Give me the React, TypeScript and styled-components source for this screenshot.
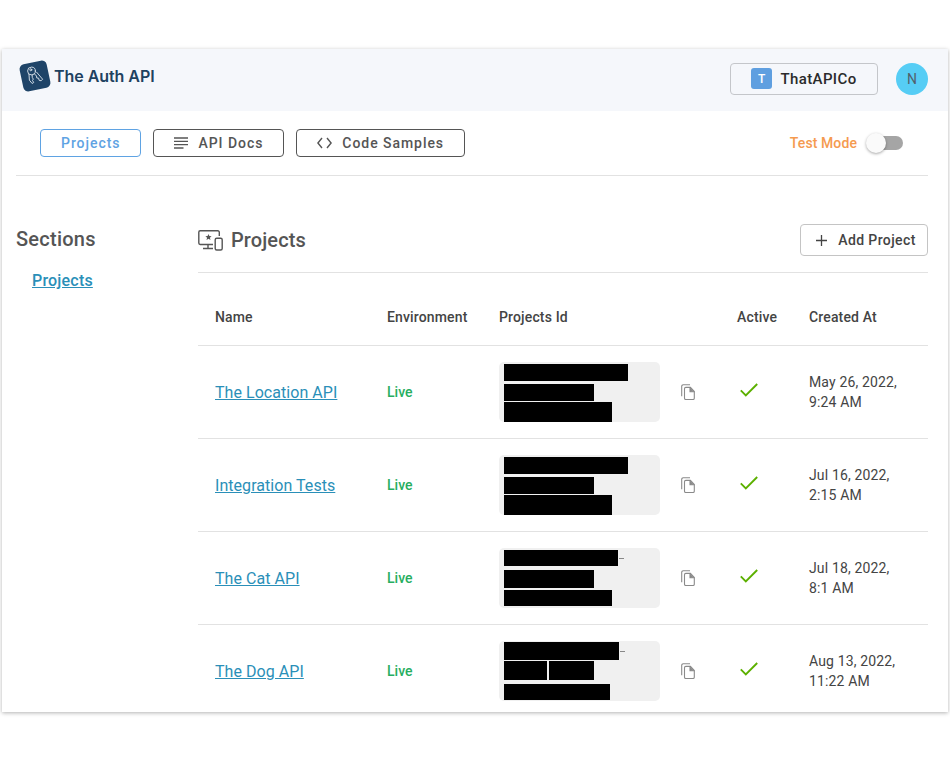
import styled, { createGlobalStyle } from 'styled-components';

type Bar = { width: number; height: number; top: number; dash?: boolean; split?: number };

type Project = {
  name: string;
  createdDate: string;
  createdTime: string;
  bars: Bar[];
};

const projects: Project[] = [
  {
    name: 'The Location API',
    createdDate: 'May 26, 2022,',
    createdTime: '9:24 AM',
    bars: [
      { width: 124, height: 17, top: 2 },
      { width: 90, height: 17, top: 3 },
      { width: 108, height: 20, top: 1 },
    ],
  },
  {
    name: 'Integration Tests',
    createdDate: 'Jul 16, 2022,',
    createdTime: '2:15 AM',
    bars: [
      { width: 124, height: 17, top: 2 },
      { width: 90, height: 17, top: 3 },
      { width: 108, height: 20, top: 1 },
    ],
  },
  {
    name: 'The Cat API',
    createdDate: 'Jul 18, 2022,',
    createdTime: '8:1 AM',
    bars: [
      { width: 114, height: 16, top: 2, dash: true },
      { width: 90, height: 18, top: 4 },
      { width: 108, height: 16, top: 2 },
    ],
  },
  {
    name: 'The Dog API',
    createdDate: 'Aug 13, 2022,',
    createdTime: '11:22 AM',
    bars: [
      { width: 115, height: 18, top: 1, dash: true },
      { width: 90, height: 19, top: 1, split: 43 },
      { width: 106, height: 16, top: 4 },
    ],
  },
];

export default function App() {
  return (
    <>
      <GlobalStyle />
      <Card>
        <Header>
          <Brand>
            <svg width='34' height='34' viewBox='0 0 34 34' fill='none'>
              <rect x='3.2' y='3.2' width='27.600' height='27.600' rx='5' transform='rotate(-12 17 17)' fill='#1f4468' />
              <g stroke='#dfe7ee' strokeWidth='0.9' strokeLinecap='round' strokeLinejoin='round'>
                <circle cx='13.500' cy='12' r='3.900' />
                <circle cx='12.800' cy='10.800' r='1' />
                <path d='M16.200 14.600l2.300 2.400.3 2 1.900.2.300 2 2.100.6 1.500-1.600-6-7' />
                <path d='M11 15.400l.4 5.800 2.700 3.300 1.600-1-1.200-2 .8-1.400-1-1.600-.2-2.700' />
              </g>
            </svg>
            <BrandName>The Auth API</BrandName>
          </Brand>
          <HeaderRight>
            <OrgButton>
              <OrgBadge>T</OrgBadge>
              ThatAPICo
            </OrgButton>
            <Avatar>N</Avatar>
          </HeaderRight>
        </Header>

        <Nav>
          <NavTabs>
            <NavButton $active>Projects</NavButton>
            <NavButton>
              <svg width='14' height='13' viewBox='0 0 14 13' fill='none' stroke='#555' strokeWidth='1.3'>
                <path d='M0 1h14M0 4.300h14M0 7.600h14M0 11h9.500' />
              </svg>
              API Docs
            </NavButton>
            <NavButton>
              <svg width='15' height='12' viewBox='0 0 15 12' fill='none' stroke='#555' strokeWidth='1.4'>
                <path d='M5 1L.9 6 5 11M10 1l4.100 5-4.100 5' />
              </svg>
              Code Samples
            </NavButton>
          </NavTabs>
          <TestMode>
            Test Mode
            <Toggle>
              <Knob />
            </Toggle>
          </TestMode>
        </Nav>

        <Body>
          <Sidebar>
            <SidebarTitle>Sections</SidebarTitle>
            <SidebarLink href='#'>Projects</SidebarLink>
          </Sidebar>

          <Main>
            <TitleRow>
              <Title>
                <svg width='25' height='21' viewBox='0 0 25 21' fill='none' stroke='#555' strokeWidth='1.4'>
                  <path d='M15 14.500H2.200A1.500 1.500 0 0 1 .8 13V2.300A1.500 1.500 0 0 1 2.200.8h17.600a1.500 1.500 0 0 1 1.500 1.500V6' />
                  <path d='M5 18.500h10M10 14.500v4' />
                  <rect x='17.200' y='8.200' width='7' height='11.800' rx='1.500' />
                  <path d='M10.500 4l.9 2.100 2.200.2-1.700 1.400.6 2.200-2-1.200-2 1.200.6-2.200-1.700-1.400 2.200-.2z' fill='#555' stroke='none' />
                </svg>
                Projects
              </Title>
              <AddButton>
                <svg width='11' height='11' viewBox='0 0 11 11' fill='none' stroke='#444' strokeWidth='1.3'>
                  <path d='M5.500 0v11M0 5.500h11' />
                </svg>
                Add Project
              </AddButton>
            </TitleRow>

            <HeadRow>
              <span>Name</span>
              <span>Environment</span>
              <span>Projects Id</span>
              <span>Active</span>
              <span>Created At</span>
            </HeadRow>

            {projects.map((project) => (
              <Row key={project.name}>
                <NameLink href='#'>{project.name}</NameLink>
                <Env>Live</Env>
                <IdCell>
                  <IdBox>
                    {project.bars.map((bar, index) => (
                      <RedactedLine key={index} $top={bar.top}>
                        {bar.split ? (
                          <>
                            <Redacted $width={bar.split} $height={bar.height} />
                            <Redacted $width={bar.width - bar.split - 2} $height={bar.height} />
                          </>
                        ) : (
                          <Redacted $width={bar.width} $height={bar.height} />
                        )}
                        {bar.dash && <Dash />}
                      </RedactedLine>
                    ))}
                  </IdBox>
                  <svg width='14' height='16' viewBox='0 0 14 16' fill='none' stroke='#8a8a8a' strokeWidth='1.1'>
                    <path d='M9 .8H2.200A1.500 1.500 0 0 0 .7 2.300v9.900' />
                    <path d='M4.800 3.400h4.600l3.900 4v6.800a1.300 1.300 0 0 1-1.300 1.300H4.800a1.300 1.300 0 0 1-1.300-1.300V4.700a1.300 1.300 0 0 1 1.300-1.300z' />
                    <path d='M9 3.500v4.300h4.300' fill='#8a8a8a' />
                  </svg>
                </IdCell>
                <CheckIcon width='18' height='14' viewBox='0 0 18 14' fill='none' stroke='#5cb000' strokeWidth='1.9'>
                  <path d='M.8 7.400l5 5L17.200 1' />
                </CheckIcon>
                <Created>
                  {project.createdDate}
                  <br />
                  {project.createdTime}
                </Created>
              </Row>
            ))}
          </Main>
        </Body>
      </Card>
    </>
  );
}

const GlobalStyle = createGlobalStyle`
  html, body {
    margin: 0;
    padding: 0;
    background: #ffffff;
    font-family: Roboto, "Liberation Sans", sans-serif;
  }
  body {
    box-sizing: border-box;
    min-height: 760px;
    padding-top: 49px;
  }
`;

const Card = styled.div`
  margin: 0 2px;
  height: 663px;
  overflow: hidden;
  background: #ffffff;
  box-shadow: 0 1px 4px rgba(0, 0, 0, 0.3);
`;

const Header = styled.header`
  height: 62px;
  display: flex;
  align-items: center;
  justify-content: space-between;
  padding: 0 20px 0 16px;
  background: #f5f7fb;
`;

const Brand = styled.div`
  display: flex;
  align-items: center;
  gap: 3px;
  margin-top: -9px;
`;

const BrandName = styled.span`
  font-family: Inter, sans-serif;
  font-size: 16px;
  font-weight: 600;
  letter-spacing: -0.05px;
  color: #20415f;
  margin: 1px 0 0 -1px;
`;

const HeaderRight = styled.div`
  display: flex;
  align-items: center;
  gap: 18px;
  margin-top: -3px;
`;

const OrgButton = styled.div`
  width: 148px;
  height: 32px;
  box-sizing: border-box;
  display: flex;
  align-items: center;
  justify-content: center;
  gap: 8px;
  border: 1px solid #c4c6ca;
  border-radius: 4px;
  font-size: 15px;
  font-weight: 500;
  letter-spacing: 0.4px;
  color: #2b2b2b;
`;

const OrgBadge = styled.span`
  width: 21px;
  height: 21px;
  display: flex;
  align-items: center;
  justify-content: center;
  border-radius: 3px;
  background: #5f9fe0;
  color: #ffffff;
  font-size: 12px;
  font-weight: 500;
`;

const Avatar = styled.div`
  width: 32px;
  height: 32px;
  display: flex;
  align-items: center;
  justify-content: center;
  border-radius: 50%;
  background: #56cdf5;
  color: #52606b;
  font-size: 14px;
`;

const Nav = styled.nav`
  height: 65px;
  box-sizing: border-box;
  margin: 0 20px 0 14px;
  padding: 0 25px 0 24px;
  display: flex;
  align-items: center;
  justify-content: space-between;
  border-bottom: 1px solid #e2e2e2;
`;

const NavTabs = styled.div`
  display: flex;
  gap: 12px;
`;

const NavButton = styled.button<{ $active?: boolean }>`
  height: 28px;
  padding: 0 20px;
  display: flex;
  align-items: center;
  gap: 10px;
  background: #ffffff;
  border: 1px solid ${(p) => (p.$active ? '#5fa3e3' : '#555555')};
  border-radius: 4px;
  font-family: Roboto, sans-serif;
  font-size: 14px;
  font-weight: 500;
  letter-spacing: 0.95px;
  color: ${(p) => (p.$active ? '#5fa3e3' : '#555555')};
`;

const TestMode = styled.div`
  display: flex;
  align-items: center;
  gap: 11px;
  font-size: 14px;
  font-weight: 500;
  letter-spacing: 0.1px;
  color: #f59a4f;
`;

const Toggle = styled.div`
  position: relative;
  width: 35px;
  height: 14px;
  border-radius: 7px;
  background: #a5a5a5;
`;

const Knob = styled.div`
  position: absolute;
  left: -2px;
  top: -3px;
  width: 20px;
  height: 20px;
  border-radius: 50%;
  background: #fafafa;
  box-shadow: 0 1px 3px rgba(0, 0, 0, 0.35);
`;

const Body = styled.div`
  display: flex;
  padding: 48px 20px 0 14px;
`;

const Sidebar = styled.aside`
  width: 182px;
  flex-shrink: 0;
`;

const SidebarTitle = styled.div`
  margin-top: 3px;
  font-size: 20px;
  line-height: 24px;
  font-weight: 500;
  letter-spacing: 0.25px;
  color: #555555;
`;

const SidebarLink = styled.a`
  display: inline-block;
  margin: 20px 0 0 16px;
  font-size: 16px;
  font-weight: 500;
  letter-spacing: 0.2px;
  color: #2a8fb8;
`;

const Main = styled.main`
  flex: 1;
  min-width: 0;
`;

const TitleRow = styled.div`
  height: 49px;
  box-sizing: border-box;
  display: flex;
  justify-content: space-between;
  align-items: flex-start;
  border-bottom: 1px solid #e2e2e2;
`;

const Title = styled.h2`
  margin: 0;
  height: 32px;
  display: flex;
  align-items: center;
  gap: 8px;
  font-size: 20px;
  font-weight: 500;
  letter-spacing: 0.1px;
  color: #555555;
`;

const AddButton = styled.button`
  width: 128px;
  height: 32px;
  padding: 0 0 0 4px;
  display: flex;
  align-items: center;
  justify-content: center;
  gap: 11px;
  background: #ffffff;
  border: 1px solid #c4c4c4;
  border-radius: 4px;
  font-family: Roboto, sans-serif;
  font-size: 14px;
  font-weight: 500;
  letter-spacing: 0.4px;
  color: #444444;
`;

const columns = `
  display: grid;
  grid-template-columns: 172px 112px 238px 72px 1fr;
  align-items: center;
  padding-left: 17px;
`;

const HeadRow = styled.div`
  ${columns}
  height: 72px;
  box-sizing: border-box;
  padding-top: 16px;
  font-size: 14px;
  font-weight: 500;
  letter-spacing: 0.15px;
  color: #444444;
`;

const Row = styled.div`
  ${columns}
  height: 93px;
  box-sizing: border-box;
  border-top: 1px solid #e2e2e2;
`;

const NameLink = styled.a`
  font-size: 16px;
  letter-spacing: 0.05px;
  color: #2a8fb8;
  text-decoration: underline;
`;

const Env = styled.span`
  font-size: 14px;
  font-weight: 500;
  color: #27ae60;
`;

const IdCell = styled.div`
  display: flex;
  align-items: center;
  gap: 21px;
`;

const IdBox = styled.div`
  width: 161px;
  height: 60px;
  box-sizing: border-box;
  padding: 0 5px;
  border-radius: 5px;
  background: #f0f0f0;
`;

const RedactedLine = styled.div<{ $top: number }>`
  display: flex;
  align-items: center;
  gap: 2px;
  margin-top: ${(p) => p.$top}px;
`;

const Redacted = styled.div<{ $width: number; $height: number }>`
  width: ${(p) => p.$width}px;
  height: ${(p) => p.$height}px;
  background: #000000;
`;

const Dash = styled.div`
  width: 5px;
  height: 1px;
  margin-left: -1px;
  background: #888888;
`;

const CheckIcon = styled.svg`
  margin: -4px 0 0 3px;
`;

const Created = styled.div`
  font-size: 14px;
  line-height: 20px;
  letter-spacing: 0.15px;
  color: #444444;
`;
